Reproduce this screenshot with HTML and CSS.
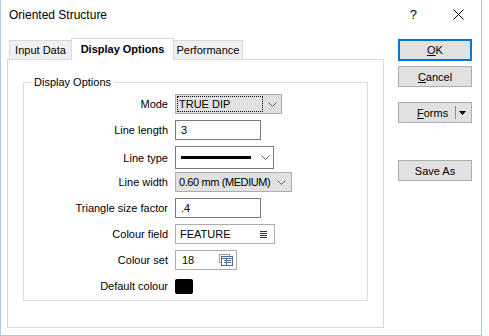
FILE: index.html
```html
<!DOCTYPE html>
<html lang="en">
<head>
    <meta charset="UTF-8">
    <title>Oriented Structure</title>
    <link rel="stylesheet" href="styles.css">
</head>
<body>

    <div class="window">
        <div class="titlebar">
            <span class="title">Oriented Structure</span>
            <span class="help">?</span>
            <svg class="close" width="11" height="11" viewBox="0 0 11 11">
                <path d="M0.5 0.5 L10.5 10.5 M10.5 0.5 L0.5 10.5" stroke="#000" stroke-width="1" fill="none"/>
            </svg>
        </div>

        <div class="main">
            <div class="tabs-area">
                <div class="tabstrip">
                    <div class="tab tab-first">Input Data</div>
                    <div class="tab tab-active">Display Options</div>
                    <div class="tab tab-last">Performance</div>
                </div>

                <div class="panel">
                    <fieldset class="group">
                        <legend>Display Options</legend>

                        <div class="row">
                            <label>Mode</label>
                            <div class="select select-mode">
                                <span class="focus">TRUE DIP</span>
                                <svg class="chevron" width="9" height="5" viewBox="0 0 9 5"><polyline points="0.5,0.5 4.5,4.5 8.5,0.5" fill="none" stroke="#606060"/></svg>
                            </div>
                        </div>

                        <div class="row">
                            <label>Line length</label>
                            <div class="text-input input-short">3</div>
                        </div>

                        <div class="row row-tall">
                            <label>Line type</label>
                            <div class="linetype">
                                <span class="line-sample"></span>
                                <svg class="chevron" width="9" height="5" viewBox="0 0 9 5"><polyline points="0.5,0.5 4.5,4.5 8.5,0.5" fill="none" stroke="#606060"/></svg>
                            </div>
                        </div>

                        <div class="row">
                            <label>Line width</label>
                            <div class="select select-width">
                                <span class="select-text">0.60 mm (MEDIUM)</span>
                                <svg class="chevron" width="9" height="5" viewBox="0 0 9 5"><polyline points="0.5,0.5 4.5,4.5 8.5,0.5" fill="none" stroke="#606060"/></svg>
                            </div>
                        </div>

                        <div class="row">
                            <label>Triangle size factor</label>
                            <div class="text-input input-short">.4</div>
                        </div>

                        <div class="row">
                            <label>Colour field</label>
                            <div class="text-input input-light input-field">
                                <span>FEATURE</span>
                                <svg width="7" height="7" viewBox="0 0 7 7">
                                    <path d="M0 0.5 H7 M0 2.5 H7 M0 4.5 H7 M0 6.5 H7" stroke="#333" stroke-width="1"/>
                                </svg>
                            </div>
                        </div>

                        <div class="row">
                            <label>Colour set</label>
                            <div class="text-input input-light input-set">
                                <span>18</span>
                                <svg width="14" height="12" viewBox="0 0 14 12">
                                    <rect x="0.5" y="0.5" width="10" height="8" fill="#fff" stroke="#8aa2c2"/>
                                    <rect x="2.5" y="2.5" width="11" height="9" fill="#fff" stroke="#4f6d99"/>
                                    <path d="M3 4.5 H13 M5 6.5 H12 M5 8.5 H12 M7.5 5 V11" stroke="#4f6d99" stroke-width="1"/>
                                </svg>
                            </div>
                        </div>

                        <div class="row row-last">
                            <label>Default colour</label>
                            <span class="swatch"></span>
                        </div>
                    </fieldset>
                </div>
            </div>

            <div class="buttons">
                <div class="btn btn-default"><span><u>O</u>K</span></div>
                <div class="btn btn-cancel"><span><u>C</u>ancel</span></div>
                <div class="btn btn-forms">
                    <span class="forms-text"><u>F</u>orms</span>
                    <span class="sep"></span>
                    <svg width="7" height="4" viewBox="0 0 7 4"><polygon points="0,0 7,0 3.5,4" fill="#000"/></svg>
                </div>
                <div class="btn btn-save"><span>Save As</span></div>
            </div>
        </div>
    </div>

</body>
</html>
```

FILE: styles.css
```css
body {
    margin: 0;
    background-color: #fff;
    font-family: "Liberation Sans", Arial, sans-serif;
    font-size: 11px;
    color: #000;
}

.window {
    width: 482px;
    height: 336px;
    box-sizing: border-box;
    border-left: 1px solid #a9c8ea;
    border-right: 1px solid #a9c8ea;
    border-bottom: 1px solid #a9c8ea;
    background-color: #fff;
}

.titlebar {
    height: 30px;
    display: flex;
    align-items: center;
}

.title {
    font-size: 12px;
    margin-left: 8px;
    padding-bottom: 1px;
}

.help {
    margin-left: auto;
    font-size: 13px;
    margin-right: 36px;
    padding-bottom: 1px;
}

.close {
    margin-right: 17px;
    margin-top: -1px;
}

.main {
    display: flex;
    padding-top: 8px;
    padding-left: 6px;
}

.tabs-area {
    width: 377px;
}

.tabstrip {
    display: flex;
    align-items: flex-end;
    height: 21px;
    padding-left: 2px;
}

.tab {
    box-sizing: border-box;
    height: 19px;
    background-color: #f0f0f0;
    border: 1px solid #d9d9d9;
    border-bottom: none;
    text-align: center;
    line-height: 18px;
}

.tab-first {
    width: 63px;
    margin-right: -1px;
}

.tab-active {
    width: 103px;
    height: 22px;
    margin-bottom: -1px;
    background-color: #fff;
    font-weight: bold;
    line-height: 20px;
    position: relative;
    z-index: 1;
}

.tab-last {
    width: 70px;
    margin-left: -1px;
}

.panel {
    box-sizing: border-box;
    height: 269px;
    border: 1px solid #d9d9d9;
    background-color: #fff;
    padding-top: 16px;
}

.group {
    margin: 0 15px;
    padding: 5px 0 4px 0;
    border: 1px solid #dcdcdc;
}

.group legend {
    margin-left: 7px;
    padding: 0 3px;
    line-height: 13px;
}

.row {
    display: flex;
    align-items: center;
    min-height: 20px;
    margin-bottom: 6px;
}

.row-tall {
    margin-bottom: 3px;
}

.row-last {
    margin-bottom: 0;
}

.row label {
    width: 144px;
    margin-right: 7px;
    text-align: right;
}

.select {
    box-sizing: border-box;
    height: 20px;
    display: flex;
    align-items: center;
    justify-content: space-between;
    background-color: #e1e1e1;
    border: 1px solid #adadad;
    padding-right: 4px;
}

.select-mode {
    width: 107px;
}

.select-width {
    width: 117px;
    padding-right: 5px;
}

.focus {
    box-sizing: border-box;
    width: 86px;
    height: 16px;
    margin-left: 1px;
    padding-left: 1px;
    border: 1px dotted #000;
    line-height: 14px;
}

.select-text {
    padding-left: 3px;
    letter-spacing: -0.4px;
}

.text-input {
    box-sizing: border-box;
    height: 20px;
    border: 1px solid #7a7a7a;
    padding-left: 5px;
    line-height: 18px;
    background-color: #fff;
}

.input-short {
    width: 86px;
}

.input-light {
    border-color: #adadad;
    display: flex;
    align-items: center;
    justify-content: space-between;
}

.input-field {
    width: 100px;
    padding-left: 4px;
    padding-right: 7px;
}

.input-set {
    width: 62px;
    padding-left: 6px;
    padding-right: 3px;
}

.linetype {
    box-sizing: border-box;
    width: 99px;
    height: 23px;
    border: 1px solid #7a7a7a;
    display: flex;
    align-items: center;
    padding-left: 5px;
}

.line-sample {
    width: 70px;
    height: 3px;
    background-color: #000;
}

.linetype .chevron {
    margin-left: 10px;
}

.swatch {
    width: 18px;
    height: 15px;
    background-color: #000;
    border-radius: 2px;
}

.buttons {
    margin-left: 14px;
    width: 74px;
}

.btn {
    box-sizing: border-box;
    height: 21px;
    background-color: #e1e1e1;
    border: 1px solid #adadad;
    display: flex;
    align-items: center;
    justify-content: center;
}

.btn-default {
    height: 22px;
    margin-top: 1px;
    border: 2px solid #0078d7;
}

.btn-cancel {
    margin-top: 5px;
}

.btn-forms {
    margin-top: 15px;
    justify-content: flex-start;
    padding-left: 18px;
}

.sep {
    width: 1px;
    height: 13px;
    background-color: #8a8a8a;
    margin-left: 7px;
    margin-right: 3px;
}

.btn-save {
    margin-top: 37px;
}
```
